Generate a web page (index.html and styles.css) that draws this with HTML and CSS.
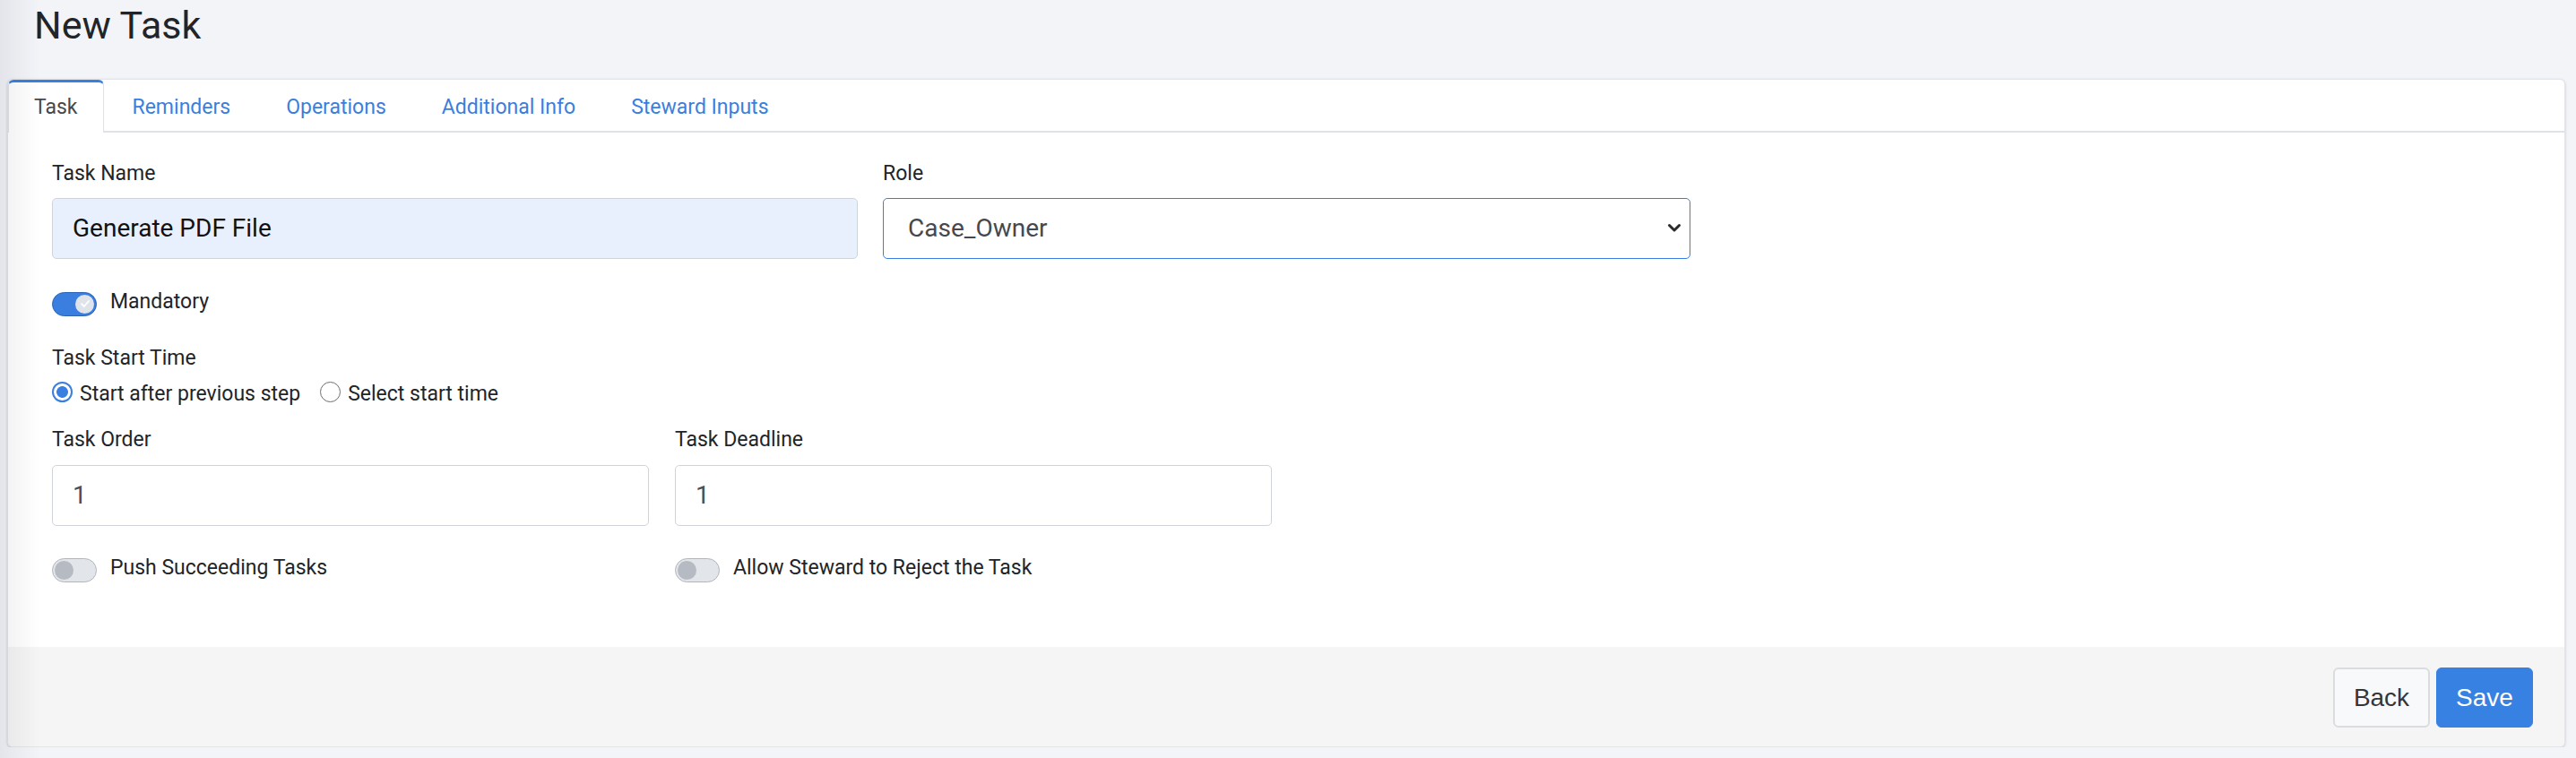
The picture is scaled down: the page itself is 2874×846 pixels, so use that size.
FILE: index.html
```html
<!DOCTYPE html>
<html lang="en">
<head>
<meta charset="utf-8">
<title>New Task</title>
<link rel="stylesheet" href="styles.css">
</head>
<body>
<div class="shade"></div>
<header class="page-head">
  <h1 class="title">New Task</h1>
</header>
<section class="card">
  <nav class="tabs">
    <a class="tab active">Task</a>
    <a class="tab">Reminders</a>
    <a class="tab">Operations</a>
    <a class="tab">Additional Info</a>
    <a class="tab">Steward Inputs</a>
  </nav>
  <div class="card-body">
    <div class="row row-wide">
      <div class="field field-name">
        <label class="label">Task Name</label>
        <div class="input autofill">Generate PDF File</div>
      </div>
      <div class="field field-role">
        <label class="label">Role</label>
        <div class="input select">
          <span>Case_Owner</span>
          <svg class="chev" width="16" height="11" viewBox="0 0 16 11"><path d="M2.5 2.5 L8 8 L13.5 2.5" fill="none" stroke="#2b2b2b" stroke-width="3" stroke-linecap="round" stroke-linejoin="round"/></svg>
        </div>
      </div>
    </div>

    <div class="switch-row mandatory">
      <span class="switch on"><span class="knob"><svg width="12" height="10" viewBox="0 0 12 10"><path d="M2 5.2 L4.8 8 L10 2" fill="none" stroke="#fff" stroke-width="1.8" stroke-linecap="round" stroke-linejoin="round"/></svg></span></span>
      <span class="switch-label">Mandatory</span>
    </div>

    <div class="label start-label">Task Start Time</div>
    <div class="radios">
      <span class="radio checked"></span><span class="radio-text">Start after previous step</span>
      <span class="radio second"></span><span class="radio-text">Select start time</span>
    </div>

    <div class="row row-narrow">
      <div class="field field-small">
        <label class="label">Task Order</label>
        <div class="input plain">1</div>
      </div>
      <div class="field field-small">
        <label class="label">Task Deadline</label>
        <div class="input plain">1</div>
      </div>
    </div>

    <div class="row row-narrow switches">
      <div class="switch-row field-small">
        <span class="switch"><span class="knob"></span></span>
        <span class="switch-label">Push Succeeding Tasks</span>
      </div>
      <div class="switch-row field-small">
        <span class="switch"><span class="knob"></span></span>
        <span class="switch-label">Allow Steward to Reject the Task</span>
      </div>
    </div>
  </div>
  <footer class="card-foot">
    <button class="btn btn-back">Back</button>
    <button class="btn btn-save">Save</button>
  </footer>
</section>
</body>
</html>
```

FILE: styles.css
```css
html, body {
  margin: 0;
  padding: 0;
}

body {
  background: #f3f4f8;
  font-family: Roboto, "Liberation Sans", sans-serif;
  color: #212529;
  overflow: hidden;
}

.shade {
  position: fixed;
  left: 0;
  top: 0;
  bottom: 0;
  width: 44px;
  background: linear-gradient(to right, rgba(40, 45, 60, 0.07), rgba(40, 45, 60, 0));
  pointer-events: none;
  z-index: 5;
}

.page-head {
  height: 88px;
  box-sizing: border-box;
  padding: 3px 0 0 38px;
}

.title {
  margin: 0;
  font-size: 43px;
  font-weight: 400;
  line-height: 1.2;
  color: #212529;
}

.card {
  margin: 0 12px 0 8px;
  height: 746px;
  box-sizing: border-box;
  background: #fff;
  border: 1px solid #e1e4e8;
  border-radius: 6px;
  box-shadow: 0 1px 3px rgba(0, 0, 0, 0.18);
  display: flex;
  flex-direction: column;
  overflow: hidden;
}

/* tabs */
.tabs {
  display: flex;
  height: 59px;
  box-sizing: border-box;
  border-bottom: 2px solid #dfe3e8;
  flex: none;
}

.tab {
  height: 57px;
  box-sizing: border-box;
  padding: 1px 30px 0;
  border: 1px solid transparent;
  border-top: 3px solid transparent;
  border-bottom: 0;
  display: flex;
  align-items: center;
  font-size: 23px;
  line-height: 1;
  color: #3a7fe0;
  cursor: pointer;
}

.tab.active {
  height: 59px;
  padding: 1px 28px 2px;
  margin-bottom: -2px;
  border-color: #dee2e6;
  border-top-color: #3a7fe0;
  border-radius: 6px 6px 0 0;
  background: #fff;
  color: #45494e;
}

.tab.active + .tab {
  padding-left: 31px;
}

/* body */
.card-body {
  flex: 1;
  padding: 29px 0 0 49px;
}

.label {
  display: block;
  font-size: 23px;
  line-height: 34.5px;
  color: #212529;
}

.row {
  display: flex;
}

.row-wide {
  gap: 28px;
}

.row-narrow {
  gap: 29px;
}

.field-name {
  width: 899px;
}

.field-role {
  width: 901px;
}

.field-small {
  width: 666px;
}

.input {
  display: flex;
  align-items: center;
  height: 68px;
  margin-top: 9px;
  box-sizing: border-box;
  border: 1px solid #cfd4da;
  border-radius: 5px;
  padding: 0 22px;
  font-size: 28px;
  color: #495057;
}

.autofill {
  background: #e8f0fe;
  color: #111;
}

.select {
  border-color: #3a7fe0;
  padding: 0 9px 0 27px;
  color: #45494f;
}

.select .chev {
  margin-left: auto;
}

.plain {
  margin-top: 10px;
}

/* switches */
.switch-row {
  display: flex;
  align-items: flex-start;
  gap: 15px;
  font-size: 23px;
  line-height: 34.5px;
  color: #212529;
}

.mandatory {
  margin-top: 31px;
}

.switch {
  flex: none;
  width: 50px;
  height: 27px;
  margin-top: 6px;
  box-sizing: border-box;
  border-radius: 14px;
  border: 1px solid #b0b5bc;
  background: #e2e5e9;
  display: flex;
  align-items: center;
  padding: 0 2px;
}

.switch .knob {
  width: 21px;
  height: 21px;
  border-radius: 50%;
  background: #b6bbc3;
}

.switch.on {
  background: #3a7fe0;
  border-color: #2c63b3;
  justify-content: flex-end;
}

.switch.on .knob {
  background: #dfe3ea;
  display: flex;
  align-items: center;
  justify-content: center;
}

/* radios */
.start-label {
  margin-top: 29px;
}

.radios {
  display: flex;
  align-items: flex-start;
  margin-top: 5px;
  font-size: 23px;
  line-height: 34.5px;
  color: #212529;
}

.radio {
  flex: none;
  width: 23px;
  height: 23px;
  margin-top: 3px;
  margin-right: 8px;
  box-sizing: border-box;
  border-radius: 50%;
  border: 1.5px solid #6d6d6d;
  background: #fff;
}

.radio.checked {
  border: 2px solid #3a7fe0;
  background: radial-gradient(circle, #3a7fe0 0 6px, #fff 6.8px);
}

.radio.second {
  margin-left: 22px;
}

.row-narrow:not(.switches) {
  margin-top: 17px;
}

.switches {
  margin-top: 30px;
}

/* footer */
.card-foot {
  flex: none;
  height: 111px;
  box-sizing: border-box;
  padding: 23px 35px 0;
  background: #f5f5f5;
  display: flex;
  justify-content: flex-end;
  align-items: flex-start;
  gap: 7px;
}

.btn {
  width: 108px;
  height: 67px;
  box-sizing: border-box;
  border-radius: 6px;
  font-family: "Liberation Sans", Arial, sans-serif;
  font-size: 28px;
  cursor: pointer;
}

.btn-back {
  background: #f8f9fa;
  border: 2px solid #dadcdf;
  color: #363636;
}

.btn-save {
  background: #3781e3;
  border: 1px solid #3781e3;
  color: #fff;
}
```
